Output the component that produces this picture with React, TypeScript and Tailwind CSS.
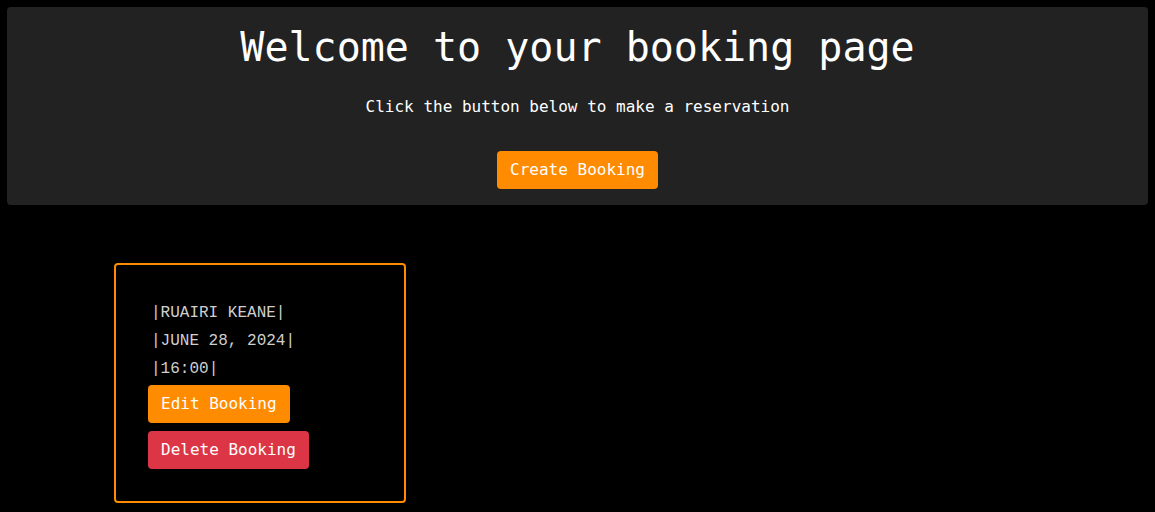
import React from "react";

const booking = {
  name: "RUAIRI KEANE",
  date: "JUNE 28, 2024",
  time: "16:00",
};

const App = () => {
  return (
    <div className="min-h-[512px] bg-black font-['DejaVu_Sans_Mono',monospace] pt-[7px]">
      <div className="mx-[7px] bg-[#222222] rounded-[4px] pt-4 pb-4 flex flex-col items-center">
        <h1 className="text-[40px] leading-[48px] text-white">
          Welcome to your booking page
        </h1>
        <p className="mt-6 text-base leading-6 text-white">
          Click the button below to make a reservation
        </p>
        <button className="mt-8 h-[38px] px-[13px] rounded-[4px] bg-[#ff8c00] text-white text-base leading-6">
          Create Booking
        </button>
      </div>

      <div className="mt-[58px] ml-[114px] w-[292px] border-2 border-[#ff8c00] rounded-[4px] px-8 pt-[34px] pb-8">
        <div className="pl-[3px] text-[#cfcfcf] text-base leading-[28px] font-['Liberation_Mono',monospace]">
          <p>|{booking.name}|</p>
          <p>|{booking.date}|</p>
          <p>|{booking.time}|</p>
        </div>
        <div className="mt-[2px] flex flex-col items-start gap-2">
          <button className="h-[38px] px-[13px] rounded-[4px] bg-[#ff8c00] text-white text-base leading-6">
            Edit Booking
          </button>
          <button className="h-[38px] px-[13px] rounded-[4px] bg-[#dc3545] text-white text-base leading-6">
            Delete Booking
          </button>
        </div>
      </div>
    </div>
  );
};

export default App;
